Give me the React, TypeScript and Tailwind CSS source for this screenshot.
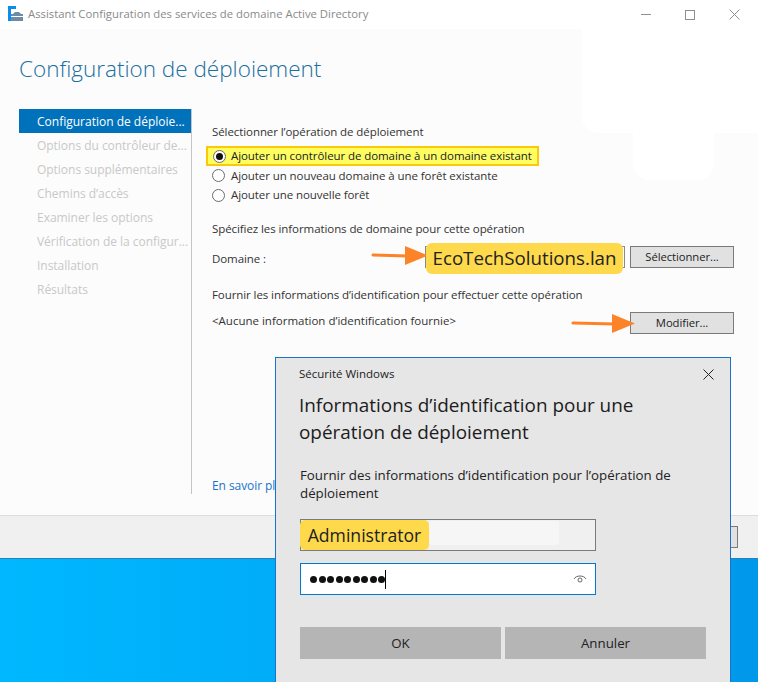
const font = { fontFamily: '"Open Sans", "Noto Sans", sans-serif' };

const steps = [
  "Options du contrôleur de...",
  "Options supplémentaires",
  "Chemins d’accès",
  "Examiner les options",
  "Vérification de la configur...",
  "Installation",
  "Résultats",
];

const Radio = ({ checked = false }: { checked?: boolean }) => (
  <span className="w-[13px] h-[13px] rounded-full border border-[#6b6b6b] bg-white flex items-center justify-center shrink-0">
    {checked && <span className="w-[7px] h-[7px] rounded-full bg-[#111]" />}
  </span>
);

const Arrow = ({ width, className }: { width: number; className: string }) => (
  <svg className={className} width={width} height="22" viewBox={`0 0 ${width} 22`}>
    <path d={`M2 10 L${width - 20} 11`} stroke="#fd8328" strokeWidth="3" strokeLinecap="round" fill="none" />
    <path d={`M${width - 23} 1 L${width} 10.5 L${width - 23} 20 Z`} fill="#fd8328" />
  </svg>
);

const Cross = ({ className }: { className: string }) => (
  <svg className={className} width="11" height="11" viewBox="0 0 11 11" fill="none" stroke="currentColor">
    <path d="M0.5 0.5 L10.5 10.5 M10.5 0.5 L0.5 10.5" />
  </svg>
);

const WinButton = ({ label }: { label: string }) => (
  <div className="w-[104px] h-[22px] border border-[#7a7a7a] bg-[#e1e1e1] flex items-center justify-center text-[11.3px] text-[#222]">
    {label}
  </div>
);

const App = () => {
  return (
    <div className="relative w-[758px] h-[682px] overflow-hidden flex flex-col bg-white" style={font}>
      {/* title bar */}
      <div className="h-[29px] bg-white flex items-center pl-2 shrink-0">
        <svg width="15" height="15" viewBox="0 0 15 15" className="mr-[5px] mb-[2px]">
          <rect x="0" y="0" width="8" height="3" fill="#0d8cea" />
          <rect x="0" y="3" width="3" height="12" fill="#0d8cea" />
          <path d="M5 8 L7 6 H11 L13 8 H15 V15 H3 V8 Z" fill="#6d8ba6" />
          <rect x="3" y="10" width="12" height="1" fill="#fff" />
        </svg>
        <span className="text-[11.3px] text-[#8a8a8a]">Assistant Configuration des services de domaine Active Directory</span>
        <div className="ml-auto flex items-center gap-[34px] pr-[18px] text-[#8f8f8f]">
          <div className="w-[10px] h-px bg-[#8f8f8f]" />
          <div className="w-[10px] h-[10px] border border-[#8f8f8f]" />
          <Cross className="" />
        </div>
      </div>

      {/* wizard body */}
      <div className="relative h-[486px] bg-[#fcfcfc] shrink-0">
        {/* redacted area */}
        <div className="absolute left-[582px] top-0 w-[176px] h-[104px] bg-white rounded-bl-[16px]" />
        <div className="absolute left-[633px] top-[100px] w-[81px] h-[51px] bg-white rounded-b-[16px]" />

        <h1 className="relative pl-[19px] pt-[23px] h-[80px] text-[22.5px] font-light text-[#1a6f9f] leading-[34px]">
          Configuration de déploiement
        </h1>

        <div className="relative flex">
          <div className="w-[172px] ml-[19px] text-[12px] shrink-0">
            <div className="h-[24px] bg-[#0072bc] text-white pl-[18px] pt-[2px] flex items-center">Configuration de déploie...</div>
            {steps.map((s) => (
              <div key={s} className="h-[24px] pl-[18px] pt-[2px] flex items-center text-[#c8c8c8] whitespace-nowrap tracking-[-0.03px]">{s}</div>
            ))}
          </div>
          <div className="w-px h-[385px] bg-[#c4c4c4] shrink-0" />

          <div className="pl-[20px] text-[11.5px] tracking-[-0.08px] text-[#333] flex-1 relative">
            <p className="mt-[14px] leading-[18px]">Sélectionner l’opération de déploiement</p>
            <div className="mt-[5px] -ml-[6px] w-[333px] h-[20px] bg-[#fdfd62] border-2 border-[#fcc90a] flex items-center gap-[5px] pl-[5px]">
              <Radio checked />
              <span className="text-[#222] whitespace-nowrap">Ajouter un contrôleur de domaine à un domaine existant</span>
            </div>
            <div className="flex items-center gap-[6px] h-[19px]">
              <Radio />
              <span>Ajouter un nouveau domaine à une forêt existante</span>
            </div>
            <div className="flex items-center gap-[6px] h-[20px]">
              <Radio />
              <span>Ajouter une nouvelle forêt</span>
            </div>

            <p className="mt-[15px] leading-[18px]">Spécifiez les informations de domaine pour cette opération</p>
            <div className="mt-[8px] flex items-center h-[22px]">
              <span className="w-[213px] pt-[3px]">Domaine :</span>
              <div className="w-[200px] h-[22px] border border-[#8a8a8a] bg-white" />
              <span className="w-[5px]" />
              <WinButton label="Sélectionner..." />
            </div>

            <p className="mt-[18px] leading-[18px]">Fournir les informations d’identification pour effectuer cette opération</p>
            <div className="mt-[8px] flex items-center justify-between h-[22px] w-[522px]">
              <span className="pb-[4px] tracking-normal">&lt;Aucune information d’identification fournie&gt;</span>
              <WinButton label="Modifier..." />
            </div>

            <a className="absolute left-[20px] top-[368px] text-[12px] text-[#1a73c9] whitespace-nowrap">En savoir plus</a>
          </div>
        </div>
      </div>

      {/* footer band */}
      <div className="h-[43px] bg-[#f0f0f0] border-t border-[#dcdcdc] flex items-center justify-end pr-[20px] shrink-0">
        <div className="w-[30px] h-[22px] bg-[#e1e1e1] border border-[#7a7a7a]" />
      </div>

      {/* desktop wallpaper */}
      <div className="flex-1 border-t border-[#2c7fb8] bg-gradient-to-r from-[#00b8ff] to-[#0098ea]" />

      {/* annotations */}
      <Arrow width={57} className="absolute left-[371px] top-[245px]" />
      <Arrow width={64} className="absolute left-[571px] top-[313px]" />
      <div className="absolute left-[426px] top-[243px] w-[197px] h-[31px] rounded-[6px] bg-[#fdd94b] text-[18.7px] text-[#222] flex items-center justify-center">
        EcoTechSolutions.lan
      </div>

      {/* credentials dialog */}
      <div className="absolute left-[275px] top-[357px] w-[456px] h-[340px] bg-[#e6e6e6] border border-[#1a73c9] pl-[23px]">
        <div className="flex items-center justify-between h-[32px] pr-[16px]">
          <span className="text-[11.5px] text-[#222]">Sécurité Windows</span>
          <Cross className="text-[#222]" />
        </div>
        <h2 className="text-[18.9px] leading-[27px] text-[#1c1c1c] mt-[2px]">
          Informations d’identification pour une
          <br />
          opération de déploiement
        </h2>
        <p className="text-[13.3px] leading-[18px] text-[#222] ml-px mt-[20px] w-[395px]">
          Fournir des informations d’identification pour l’opération de déploiement
        </p>
        <div className="relative ml-px mt-[17px] w-[296px] h-[32px] border border-[#7a7a7a] bg-[#f0f0f0]">
          <div className="absolute left-[128px] top-[1px] h-[24px] w-[130px] rounded-[3px] bg-[#f6f6f6]" />
          <div className="absolute -left-[1px] top-0 w-[129px] h-[30px] rounded-[5px] bg-[#fdd94b] flex items-center justify-center text-[17.6px] text-[#222]">
            Administrator
          </div>
        </div>
        <div className="ml-px mt-[12px] w-[296px] h-[32px] border border-[#0078d4] bg-white flex items-center pl-[9px] pr-[8px]">
          <span className="flex gap-[1.5px]">
            {Array.from({ length: 9 }).map((_, i) => (
              <span key={i} className="w-[7px] h-[7px] rounded-full bg-[#111]" />
            ))}
          </span>
          <span className="w-px h-[19px] bg-black" />
          <svg width="14" height="12" viewBox="0 0 14 12" className="ml-auto text-[#666]" fill="none" stroke="currentColor">
            <path d="M1 6 C3 2 11 2 13 6" />
            <circle cx="7" cy="7" r="2" />
          </svg>
        </div>
        <div className="ml-px mt-[32px] flex gap-[4px]">
          <div className="w-[201px] h-[32px] pt-[2px] bg-[#b5b5b5] flex items-center justify-center text-[13.3px] text-[#222]">OK</div>
          <div className="w-[201px] h-[32px] pt-[2px] bg-[#b5b5b5] flex items-center justify-center text-[13.3px] text-[#222]">Annuler</div>
        </div>
      </div>
    </div>
  );
};

export default App;
